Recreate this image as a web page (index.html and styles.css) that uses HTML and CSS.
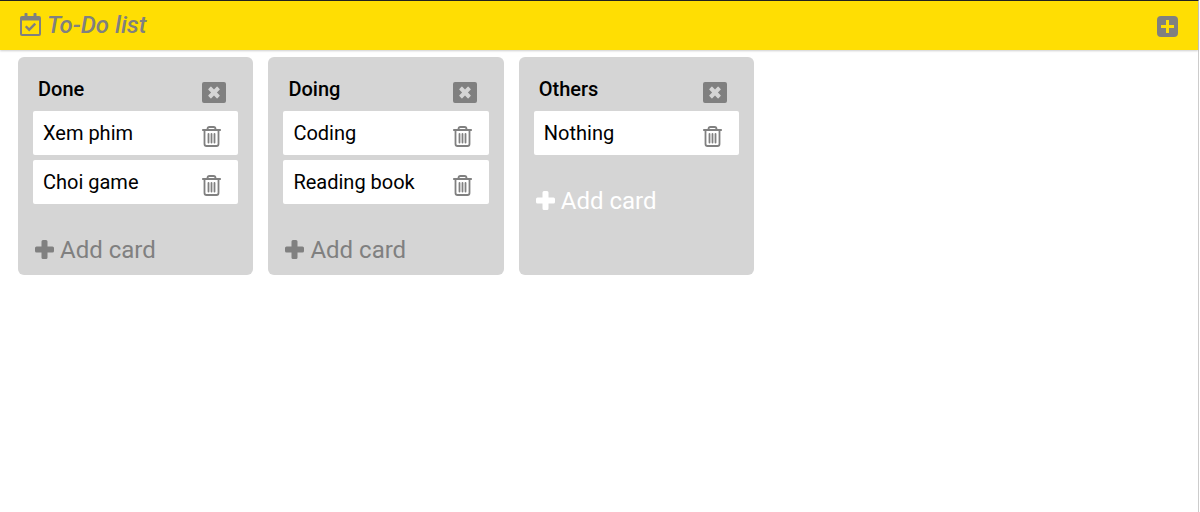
FILE: index.html
```html
<!DOCTYPE html>
<html lang="en">
<head>
<meta charset="utf-8">
<meta name="viewport" content="width=device-width, initial-scale=1">
<title>To-Do list</title>
<link rel="stylesheet" href="styles.css">
</head>
<body>
<svg class="sprite" aria-hidden="true">
  <symbol id="calendar" viewBox="0 0 21 24"><path fill-rule="evenodd" d="M2 3h2.500V.8Q4.500 0 5.300 0h1.400q.8 0 .8.800V3h6V.8q0-.8.8-.8h1.400q.8 0 .8.800V3H19q2 0 2 2v16q0 2-2 2H2q-2 0-2-2V5q0-2 2-2zM2 7.500v13q0 .5.5.5h16q.5 0 .5-.5v-13z"/><path d="M4.900 14.100l1.700-1.700 2.600 2.600 5.200-5.200 1.700 1.700-6.900 6.900z"/></symbol>
  <symbol id="plus-square" viewBox="0 0 21 21"><path fill-rule="evenodd" d="M4 0h13q4 0 4 4v13q0 4-4 4H4q-4 0-4-4V4q0-4 4-4zM9 4v5H4v3h5v5h3v-5h5V9h-5V4z"/></symbol>
  <symbol id="close" viewBox="0 0 24 21"><path fill-rule="evenodd" d="M2 0h20q2 0 2 2v17q0 2-2 2H2q-2 0-2-2V2q0-2 2-2zM8.500 4.800L6.400 6.900q-.4.400 0 .8l2.700 2.800-2.700 2.800q-.4.400 0 .8l2.100 2.100q.4.400.8 0l2.700-2.700 2.700 2.700q.4.400.8 0l2.100-2.100q.4-.4 0-.8l-2.700-2.800 2.700-2.800q.4-.4 0-.8l-2.100-2.100q-.4-.4-.8 0L12 7.500 9.300 4.800q-.4-.4-.8 0z"/></symbol>
  <symbol id="trash" viewBox="0 0 19 21"><path d="M.8 4h17.400M5.500 4V3q0-2 2-2h4q2 0 2 2v1M2.500 4v14q0 2 2 2h10q2 0 2-2V4M6.500 8v8.500M9.500 8v8.500M12.500 8v8.500" fill="none" stroke="currentColor" stroke-width="1.800" stroke-linecap="round"/></symbol>
  <symbol id="plus" viewBox="0 0 19 19"><path d="M8 0h3q1.500 0 1.500 1.500v5h5Q19 6.500 19 8v3q0 1.500-1.500 1.500h-5v5Q12.500 19 11 19H8q-1.500 0-1.500-1.500v-5h-5Q0 12.500 0 11V8q0-1.500 1.500-1.500h5v-5Q6.500 0 8 0z"/></symbol>
</svg>
<div class="app">
  <header class="topbar">
    <h1 class="brand"><svg class="icon-calendar"><use href="#calendar"/></svg>To-Do list</h1>
    <button class="icon-button" aria-label="Add list"><svg class="icon-add"><use href="#plus-square"/></svg></button>
  </header>
  <main class="board">
    <section class="list">
      <div class="list-head"><h2>Done</h2><button class="icon-button" aria-label="Delete list Done"><svg class="icon-close"><use href="#close"/></svg></button></div>
      <ul class="cards">
        <li class="card">Xem phim<button class="icon-button" aria-label="Delete Xem phim"><svg class="icon-trash"><use href="#trash"/></svg></button></li>
        <li class="card">Choi game<button class="icon-button" aria-label="Delete Choi game"><svg class="icon-trash"><use href="#trash"/></svg></button></li>
      </ul>
      <button class="add-card"><svg class="icon-plus"><use href="#plus"/></svg>Add card</button>
    </section>
    <section class="list">
      <div class="list-head"><h2>Doing</h2><button class="icon-button" aria-label="Delete list Doing"><svg class="icon-close"><use href="#close"/></svg></button></div>
      <ul class="cards">
        <li class="card">Coding<button class="icon-button" aria-label="Delete Coding"><svg class="icon-trash"><use href="#trash"/></svg></button></li>
        <li class="card">Reading book<button class="icon-button" aria-label="Delete Reading book"><svg class="icon-trash"><use href="#trash"/></svg></button></li>
      </ul>
      <button class="add-card"><svg class="icon-plus"><use href="#plus"/></svg>Add card</button>
    </section>
    <section class="list">
      <div class="list-head"><h2>Others</h2><button class="icon-button" aria-label="Delete list Others"><svg class="icon-close"><use href="#close"/></svg></button></div>
      <ul class="cards">
        <li class="card">Nothing<button class="icon-button" aria-label="Delete Nothing"><svg class="icon-trash"><use href="#trash"/></svg></button></li>
      </ul>
      <button class="add-card add-card-active"><svg class="icon-plus"><use href="#plus"/></svg>Add card</button>
    </section>
  </main>
</div>
</body>
</html>
```
FILE: styles.css
```css
* {
  box-sizing: border-box;
}

body {
  margin: 0;
  background: #fff;
  color: #000;
  font-family: Roboto, "Liberation Sans", sans-serif;
  font-size: 20px;
  line-height: 24px;
}

h1,
h2 {
  margin: 0;
}

svg {
  display: block;
  flex: none;
  fill: currentColor;
}

.sprite {
  position: absolute;
  width: 0;
  height: 0;
}

.app {
  min-height: 100vh;
  margin-right: 1px;
  border-top: 1px solid #222;
  border-right: 1px solid #ccc;
}

.topbar {
  display: flex;
  align-items: center;
  justify-content: space-between;
  height: 49px;
  padding: 0 20px 2px;
  background: #ffde03;
  box-shadow: 0 1px 2px rgba(0, 0, 0, 0.2);
  color: #808080;
}

.brand {
  display: flex;
  align-items: center;
  gap: 6px;
  font-size: 24px;
  font-style: italic;
  font-weight: 500;
}

.icon-button {
  padding: 4px 0 0;
  border: 0;
  background: none;
  color: #808080;
  cursor: pointer;
}

.icon-calendar {
  width: 21px;
  height: 24px;
}

.icon-add {
  width: 21px;
  height: 21px;
}

.icon-close {
  width: 24px;
  height: 21px;
}

.icon-trash {
  width: 19px;
  height: 21px;
}

.icon-plus {
  width: 19px;
  height: 19px;
}

.board {
  display: flex;
  gap: 15px;
  padding: 7px 3px 0 18px;
}

.list {
  flex: 0 0 20%;
  padding: 15px 15px 9px;
  border-radius: 6px;
  background: #d5d5d5;
}

.list-head {
  display: flex;
  align-items: center;
  justify-content: space-between;
  height: 39px;
  padding: 0 12px 5px 5px;
}

.list-head h2 {
  font-size: 20px;
  font-weight: 500;
}

.cards {
  display: grid;
  gap: 5px;
  margin: 0;
  padding: 0;
  list-style: none;
}

.card {
  display: flex;
  align-items: center;
  justify-content: space-between;
  height: 44px;
  padding: 0 17px 0 10px;
  border-radius: 2px;
  background: #fff;
}

.list .icon-button {
  padding-top: 6px;
}

.add-card {
  display: flex;
  align-items: center;
  gap: 6px;
  margin-top: 30px;
  padding: 0 2px;
  border: 0;
  background: none;
  color: #808080;
  font: inherit;
  font-size: 24px;
  line-height: 32px;
  cursor: pointer;
}

.add-card .icon-plus {
  margin-bottom: 2px;
}

.add-card-active {
  color: #fff;
}
```
